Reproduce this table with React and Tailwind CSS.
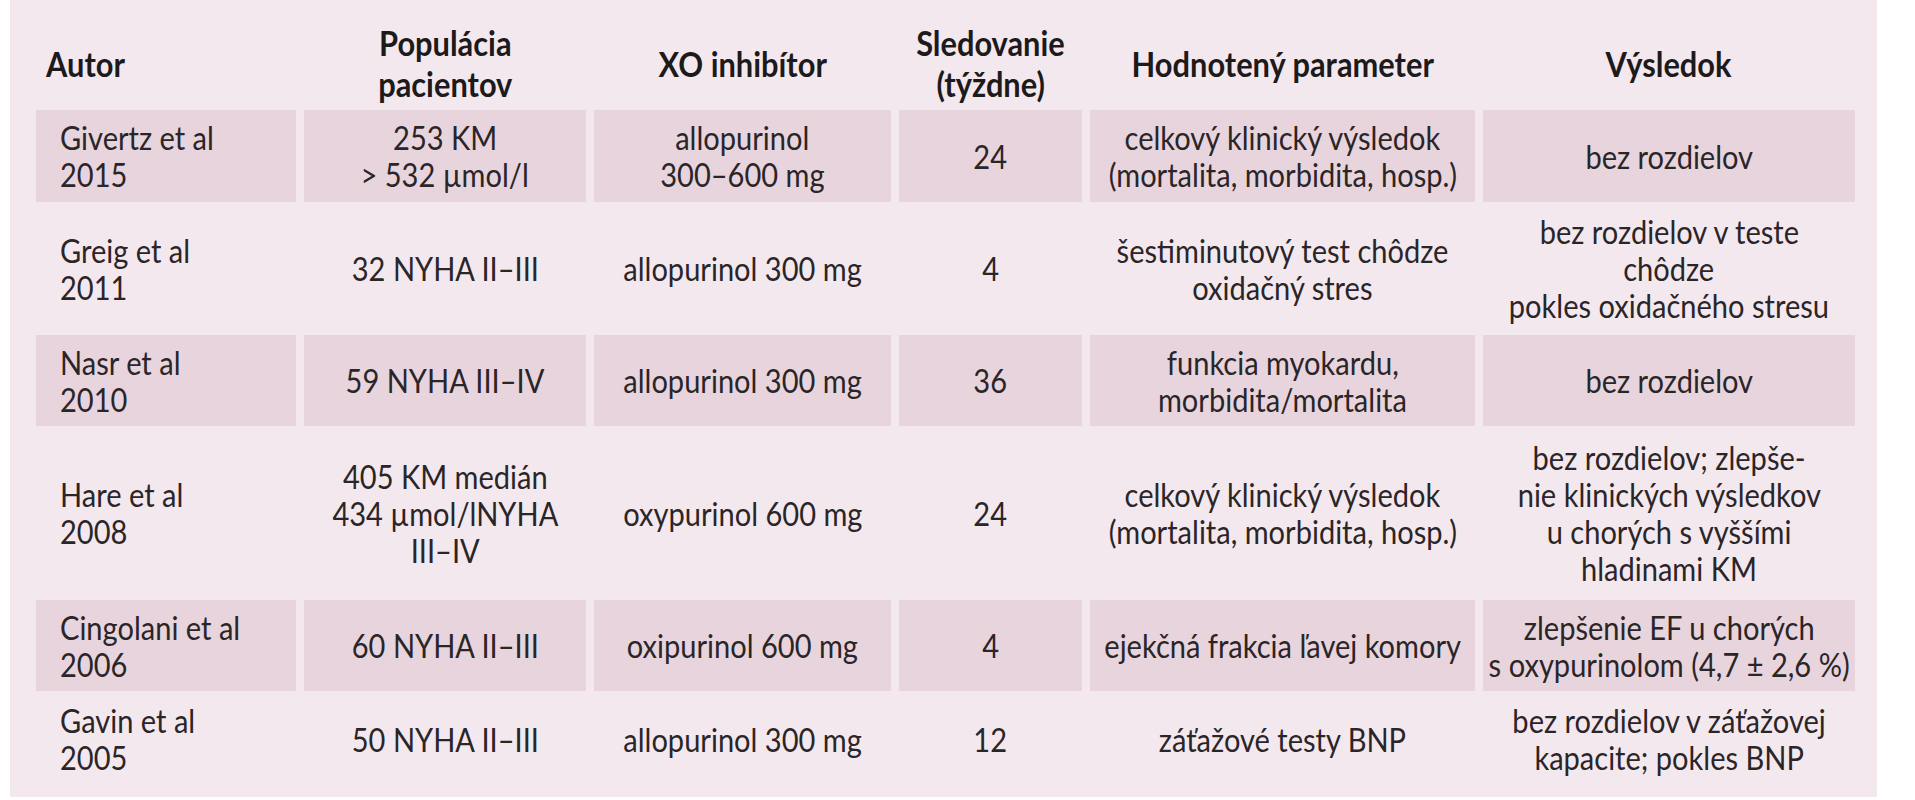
import React from 'react';

const header = [
    ['Autor'],
    ['Populácia', 'pacientov'],
    ['XO inhibítor'],
    ['Sledovanie', '(týždne)'],
    ['Hodnotený parameter'],
    ['Výsledok'],
];

const rows = [
    [
        ['Givertz et al', '2015'],
        ['253 KM', '> 532 µmol/l'],
        ['allopurinol', '300–600 mg'],
        ['24'],
        ['celkový klinický výsledok', '(mortalita, morbidita, hosp.)'],
        ['bez rozdielov'],
    ],
    [
        ['Greig et al', '2011'],
        ['32 NYHA II–III'],
        ['allopurinol 300 mg'],
        ['4'],
        ['šestiminutový test chôdze', 'oxidačný stres'],
        ['bez rozdielov v teste', 'chôdze', 'pokles oxidačného stresu'],
    ],
    [
        ['Nasr et al', '2010'],
        ['59 NYHA III–IV'],
        ['allopurinol 300 mg'],
        ['36'],
        ['funkcia myokardu,', 'morbidita/mortalita'],
        ['bez rozdielov'],
    ],
    [
        ['Hare et al', '2008'],
        ['405 KM medián', '434 µmol/lNYHA', 'III–IV'],
        ['oxypurinol 600 mg'],
        ['24'],
        ['celkový klinický výsledok', '(mortalita, morbidita, hosp.)'],
        ['bez rozdielov; zlepše-', 'nie klinických výsledkov', 'u chorých s vyššími', 'hladinami KM'],
    ],
    [
        ['Cingolani et al', '2006'],
        ['60 NYHA II–III'],
        ['oxipurinol 600 mg'],
        ['4'],
        ['ejekčná frakcia ľavej komory'],
        ['zlepšenie EF u chorých', 's oxypurinolom (4,7 ± 2,6 %)'],
    ],
    [
        ['Gavin et al', '2005'],
        ['50 NYHA II–III'],
        ['allopurinol 300 mg'],
        ['12'],
        ['záťažové testy BNP'],
        ['bez rozdielov v záťažovej', 'kapacite; pokles BNP'],
    ],
];

// the source face is a condensed humanist sans, so Lato gets squeezed a bit
const Lines = ({ lines, left }) =>
    lines.map((l, i) => (
        <span
            key={i}
            className={`inline-block whitespace-nowrap scale-x-[0.88] ${left ? 'origin-left' : 'origin-center'}`}
        >
            {l}
        </span>
    ));

export default function App() {
    return (
        <div className="min-h-screen bg-white">
            <div className="ml-[10px] w-[1867px] h-[797px] bg-[#f4e8ef] pt-[24px] pl-[26px] font-['Lato',sans-serif] text-[#2a2527]">
                <div className="grid grid-cols-[260px_282px_297px_183px_385px_372px] grid-rows-[78px_92px_117px_91px_158px_91px_80px] gap-x-2 gap-y-2">
                    {header.map((h, i) => (
                        <div
                            key={i}
                            className={`flex flex-col justify-center text-[35px] leading-[41px] font-bold text-[#1c1a1b] ${i === 0 ? 'items-start pl-[10px]' : 'items-center'}`}
                        >
                            <Lines lines={h} left={i === 0} />
                        </div>
                    ))}

                    {rows.map((row, r) =>
                        row.map((cell, c) => (
                            <div
                                key={`${r}-${c}`}
                                className={`flex flex-col justify-center text-[33px] leading-[37px] ${r % 2 === 0 ? 'bg-[#e8d4dd]' : ''} ${c === 0 ? 'items-start pl-6' : 'items-center'}`}
                            >
                                <Lines lines={cell} left={c === 0} />
                            </div>
                        ))
                    )}
                </div>
            </div>
        </div>
    );
}
